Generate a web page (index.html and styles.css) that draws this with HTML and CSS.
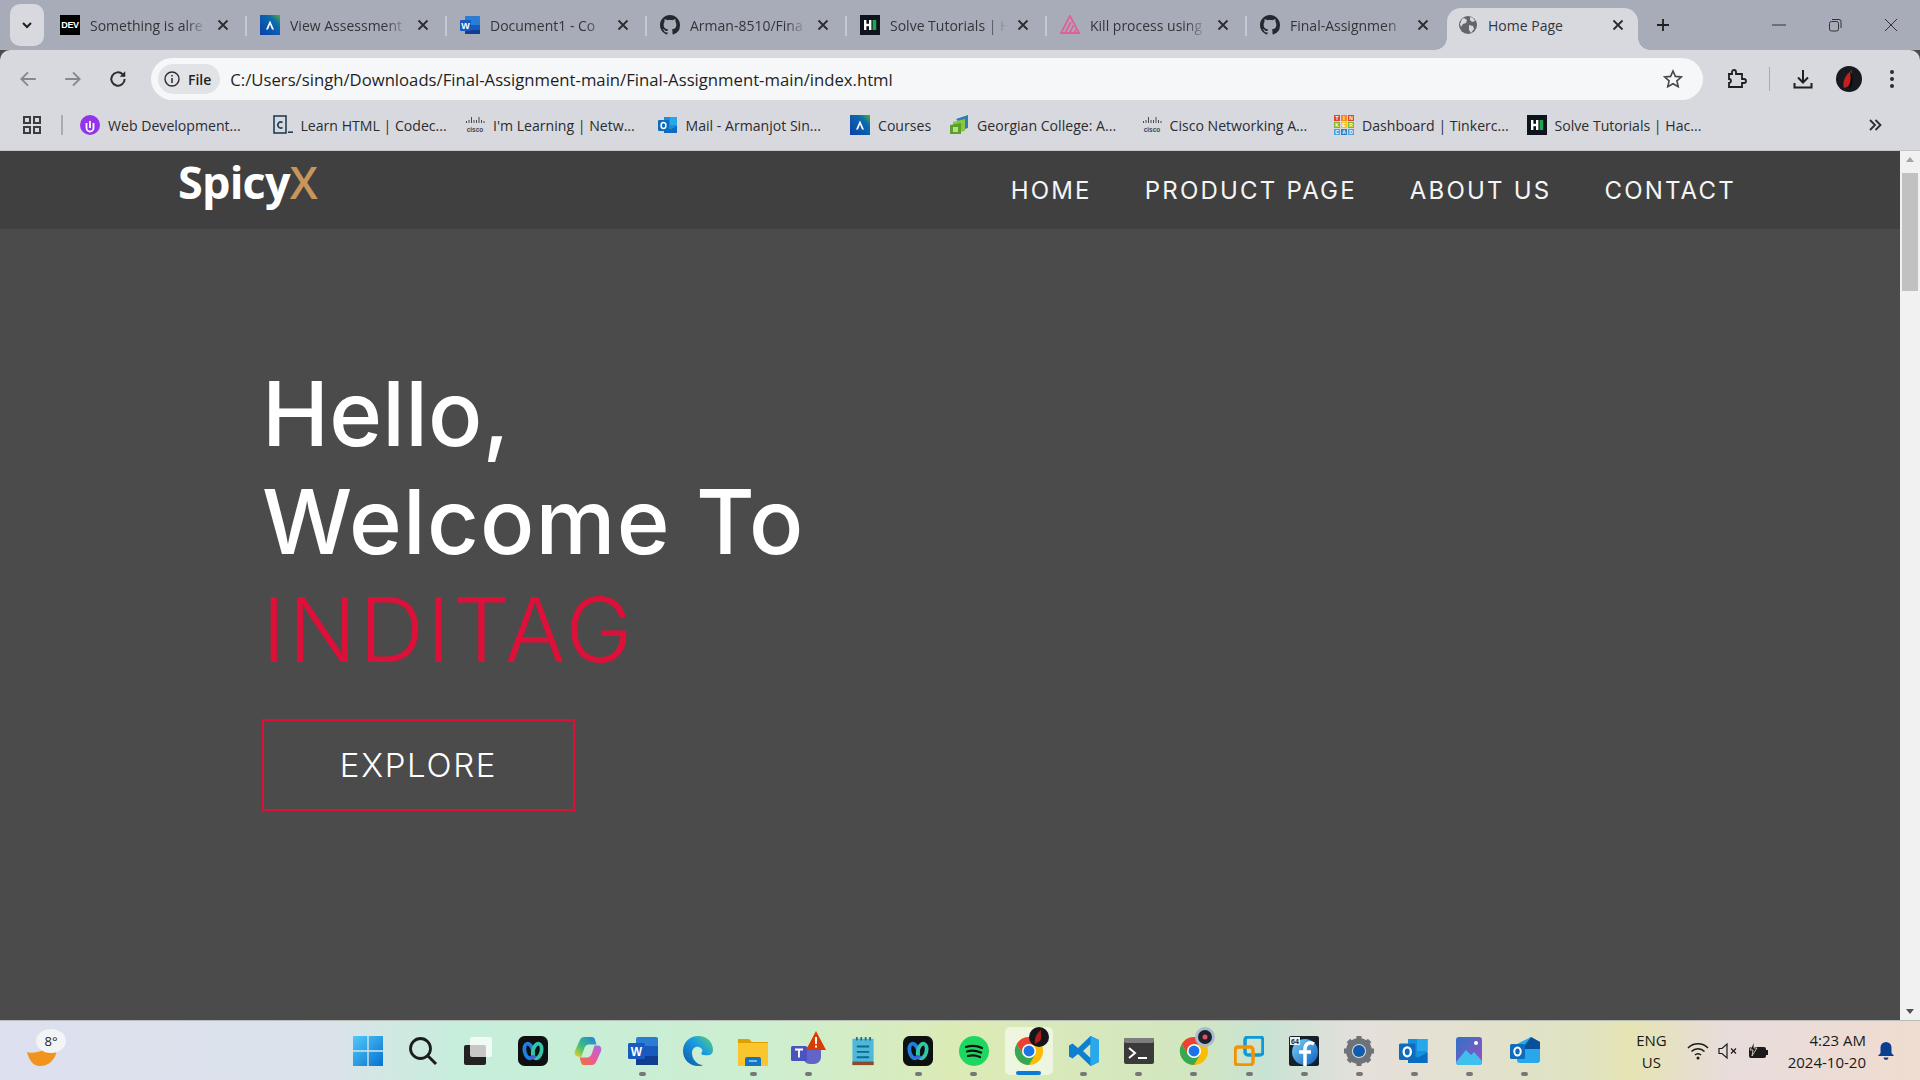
FILE: index.html
```html
<!DOCTYPE html>
<html>
<head>
<meta charset="utf-8">
<title>Home Page</title>
<link rel="stylesheet" href="styles.css">
</head>
<body>

<!-- shared icons -->
<svg class="defs" width="0" height="0">
  <symbol id="i-close" viewBox="0 0 12 12"><path d="M1.500 1.500l9 9M10.500 1.500l-9 9" fill="none" stroke="#2b2c30" stroke-width="1.800"/></symbol>
  <symbol id="i-github" viewBox="0 0 16 16"><path fill="#24292f" d="M8 0C3.58 0 0 3.58 0 8c0 3.54 2.29 6.53 5.47 7.59.4.07.55-.17.55-.38v-1.34c-2.23.48-2.7-1.07-2.7-1.07-.36-.93-.89-1.17-.89-1.17-.73-.5.05-.49.05-.49.8.06 1.23.83 1.23.83.71 1.22 1.87.87 2.33.66.07-.52.28-.87.5-1.07-1.78-.2-3.64-.89-3.64-3.95 0-.87.31-1.59.82-2.15-.08-.2-.36-1.02.08-2.12 0 0 .67-.21 2.2.82A7.7 7.7 0 0 1 8 3.9c.68 0 1.36.09 2 .27 1.53-1.04 2.2-.82 2.2-.82.44 1.1.16 1.92.08 2.12.51.56.82 1.27.82 2.15 0 3.07-1.87 3.75-3.65 3.95.29.25.54.73.54 1.48v2.19c0 .21.15.46.55.38A8 8 0 0 0 16 8c0-4.42-3.58-8-8-8z"/></symbol>
  <symbol id="i-hr" viewBox="0 0 20 20"><rect width="20" height="20" fill="#0e141e"/><rect x="4" y="5" width="2.400" height="10" fill="#fff"/><rect x="9" y="5" width="2.400" height="10" fill="#fff"/><rect x="6" y="8.800" width="3.200" height="2.400" fill="#fff"/><rect x="12.600" y="5" width="3.600" height="10" fill="#1ba94c"/></symbol>
  <symbol id="i-alg" viewBox="0 0 20 20"><defs><linearGradient id="g-alg" x1="0" y1="1" x2="1" y2="0"><stop offset="0" stop-color="#0b3fa8"/><stop offset=".7" stop-color="#0a6bb0"/><stop offset="1" stop-color="#4fb030"/></linearGradient></defs><rect width="20" height="20" fill="url(#g-alg)"/><path d="M10 5.500L14 14.500H12L10 9.600 8 14.500H6z" fill="#fff"/></symbol>
  <symbol id="i-outlook" viewBox="0 0 20 20"><rect x="6" y="2" width="13" height="16" fill="#1490df"/><rect x="12" y="2" width="7" height="8" fill="#28a8ea"/><path d="M6 11l6.500 3.500L19 11v7H6z" fill="#0a6cc0"/><rect x="0" y="5" width="11" height="11" rx="1" fill="#0f6cbd"/><ellipse cx="5.500" cy="10.500" rx="2.400" ry="3" fill="none" stroke="#fff" stroke-width="1.500"/></symbol>
  <symbol id="i-chrome" viewBox="0 0 32 32"><circle cx="16" cy="16" r="15" fill="#fbbc04"/><path d="M16 1A15 15 0 0 0 3 8.500L9.500 19.700 16 9h13A15 15 0 0 0 16 1z" fill="#ea4335"/><path d="M3 8.500A15 15 0 0 0 16 31l6.500-11.300H9.500z" fill="#34a853"/><circle cx="16" cy="16" r="7.500" fill="#fff"/><circle cx="16" cy="16" r="5.800" fill="#1a73e8"/></symbol>
  <symbol id="i-webex" viewBox="0 0 32 32"><rect width="32" height="32" rx="7" fill="#0d0f10"/><ellipse cx="11.500" cy="16" rx="4.500" ry="8" transform="rotate(-14 11.500 16)" fill="none" stroke="#1f7fe0" stroke-width="4"/><ellipse cx="20.500" cy="16" rx="4.500" ry="8" transform="rotate(14 20.500 16)" fill="none" stroke="#2fc7a8" stroke-width="4"/><path d="M14 21c.8 1.800 3.200 1.800 4 0" fill="none" stroke="#4a55d8" stroke-width="4"/></symbol>
</svg>

<div class="tabstrip">
  <button class="tab-search">
    <svg width="14" height="14" viewBox="0 0 14 14"><path d="M3 5l4 4 4-4" fill="none" stroke="#1f1f1f" stroke-width="2"/></svg>
  </button>
  <div class="tabs">
    <div class="tab">
      <span class="favicon dev">DEV</span>
      <span class="tab-title">Something is alre</span>
      <svg class="tab-close"><use href="#i-close"/></svg>
    </div>
    <div class="tab">
      <svg class="favicon"><use href="#i-alg"/></svg>
      <span class="tab-title">View Assessment</span>
      <svg class="tab-close"><use href="#i-close"/></svg>
    </div>
    <div class="tab">
      <svg class="favicon" viewBox="0 0 20 20"><rect x="5" y="1" width="15" height="18" rx="1" fill="#2b7cd3"/><rect x="5" y="10" width="15" height="5" fill="#185abd"/><rect x="5" y="15" width="15" height="4" fill="#103f91"/><rect x="0" y="5" width="11" height="11" rx="1" fill="#185abd"/><text x="5.500" y="13.500" class="word-w">W</text></svg>
      <span class="tab-title">Document1 - Co</span>
      <svg class="tab-close"><use href="#i-close"/></svg>
    </div>
    <div class="tab">
      <svg class="favicon"><use href="#i-github"/></svg>
      <span class="tab-title">Arman-8510/Fina</span>
      <svg class="tab-close"><use href="#i-close"/></svg>
    </div>
    <div class="tab">
      <svg class="favicon"><use href="#i-hr"/></svg>
      <span class="tab-title">Solve Tutorials | H</span>
      <svg class="tab-close"><use href="#i-close"/></svg>
    </div>
    <div class="tab">
      <svg class="favicon" viewBox="0 0 20 20"><g fill="none" stroke="#e0609c" stroke-width="1.800"><path d="M10 1L1 18h18z"/><path d="M5 18l6-11M9.500 18l4-7.500M14 18l2-3.500"/></g></svg>
      <span class="tab-title">Kill process using</span>
      <svg class="tab-close"><use href="#i-close"/></svg>
    </div>
    <div class="tab">
      <svg class="favicon"><use href="#i-github"/></svg>
      <span class="tab-title">Final-Assignmen</span>
      <svg class="tab-close"><use href="#i-close"/></svg>
    </div>
    <div class="tab tab-active">
      <svg class="favicon" viewBox="0 0 20 20"><circle cx="10" cy="10" r="9" fill="#62656c"/><path d="M6 3l3 2-1 3-3 1-2 3-1-3 2-5zM11 10l4 1 1 3-3 4-2-3zM12 2l3 1 2 3-3 1-2-2z" fill="#d8d9de"/></svg>
      <span class="tab-title plain">Home Page</span>
      <svg class="tab-close"><use href="#i-close"/></svg>
    </div>
  </div>
  <span class="new-tab">
    <svg width="14" height="14" viewBox="0 0 14 14"><path d="M7 1v12M1 7h12" stroke="#1f1f1f" stroke-width="1.800"/></svg>
  </span>
  <div class="win-controls">
    <svg width="14" height="14" viewBox="0 0 14 14"><path d="M0 7h14" stroke="#333" stroke-width="1"/></svg>
    <svg width="14" height="14" viewBox="0 0 14 14"><rect x="1.500" y="3.500" width="9" height="9.500" rx="2" fill="none" stroke="#333"/><path d="M4 1.500h7a2 2 0 0 1 2 2V10" fill="none" stroke="#333"/></svg>
    <svg width="14" height="14" viewBox="0 0 14 14"><path d="M1 1l12 12M13 1L1 13" stroke="#333" stroke-width="1"/></svg>
  </div>
</div>

<div class="toolbar">
  <svg class="nav-icon" viewBox="0 0 18 18"><path d="M16 9H3M9 3L3 9l6 6" fill="none" stroke="#85888f" stroke-width="1.700"/></svg>
  <svg class="nav-icon" viewBox="0 0 18 18"><path d="M2 9h13M9 3l6 6-6 6" fill="none" stroke="#85888f" stroke-width="1.700"/></svg>
  <svg class="nav-icon" viewBox="0 0 18 18"><path d="M15 9a6 6 0 1 1-1.800-4.300L15 6.500" fill="none" stroke="#2b2c30" stroke-width="1.800"/><path d="M15.500 2v5h-5z" fill="#2b2c30"/></svg>
  <div class="omnibox">
    <span class="site-chip">
      <svg width="16" height="16" viewBox="0 0 16 16"><circle cx="8" cy="8" r="7" fill="none" stroke="#2b2c30" stroke-width="1.400"/><path d="M8 7v5M8 4v1.600" stroke="#2b2c30" stroke-width="1.500"/></svg>
      File
    </span>
    <span class="url">C:/Users/singh/Downloads/Final-Assignment-main/Final-Assignment-main/index.html</span>
    <svg class="star" viewBox="0 0 20 20"><path d="M10 2l2.400 5.400 5.900.6-4.400 3.900 1.300 5.800L10 14.700l-5.200 3 1.300-5.800L1.700 8l5.900-.6z" fill="none" stroke="#45474c" stroke-width="1.600"/></svg>
  </div>
  <div class="toolbar-right">
    <svg width="22" height="22" viewBox="0 0 22 22"><path d="M3 7h4V5a2 2 0 0 1 4 0v2h6v5h2a2 2 0 0 1 0 4h-2v4H4v-4a2 2 0 0 0 0-4V7z" transform="translate(0 -1)" fill="none" stroke="#1f1f1f" stroke-width="1.800"/></svg>
    <span class="tool-sep"></span>
    <svg width="22" height="22" viewBox="0 0 22 22"><path d="M11 2v12M6 9.500l5 5 5-5M2.500 15v4.500h17V15" fill="none" stroke="#1f1f1f" stroke-width="2"/></svg>
    <svg width="26" height="26" viewBox="0 0 26 26"><circle cx="13" cy="13" r="13" fill="#161a1e"/><path d="M8 22c-2-6 1-13 8-18-1 5 1 7-1 11 0 3-3 6-7 7z" fill="#c3201f"/><path d="M14 5c3 4 4 10 1 17h-3c3-6 3-11 2-17z" fill="#0a0a0a"/></svg>
    <svg class="dots" width="6" height="20" viewBox="0 0 6 20"><circle cx="3" cy="3" r="2" fill="#2b2c30"/><circle cx="3" cy="10" r="2" fill="#2b2c30"/><circle cx="3" cy="17" r="2" fill="#2b2c30"/></svg>
  </div>
</div>

<div class="bookmarks">
  <svg class="apps" width="18" height="18" viewBox="0 0 18 18"><g fill="none" stroke="#3a3c40" stroke-width="2"><rect x="1" y="1" width="6" height="6"/><rect x="11" y="1" width="6" height="6"/><rect x="1" y="11" width="6" height="6"/><rect x="11" y="11" width="6" height="6"/></g></svg>
  <span class="bm-sep"></span>
  <div class="bm">
    <svg viewBox="0 0 20 20"><circle cx="10" cy="10" r="10" fill="#9333ea"/><path d="M6.500 8v5a3.500 3.500 0 0 0 7 0V8" fill="none" stroke="#fff" stroke-width="1.800"/><path d="M10 6v7" stroke="#fff" stroke-width="1.800"/></svg>
    Web Development...
  </div>
  <div class="bm">
    <svg viewBox="0 0 20 20"><rect x="1" y="1" width="12" height="17" fill="none" stroke="#1f3f58" stroke-width="1.600"/><path d="M9.500 7.500a3 3 0 1 0 0 5" fill="none" stroke="#1f3f58" stroke-width="1.600"/><path d="M15 17.200h5" stroke="#1f3f58" stroke-width="1.600"/></svg>
    Learn HTML | Codec...
  </div>
  <div class="bm">
    <svg viewBox="0 0 20 20"><path d="M1.500 6v2M4 5v3M6.500 2v6M9 5v3M11.500 5v3M14 2v6M16.500 5v3M19 6v2" fill="none" stroke="#45484e" stroke-width="1"/><text x="10" y="16.500" class="cisco-txt">cisco</text></svg>
    I'm Learning | Netw...
  </div>
  <div class="bm">
    <svg><use href="#i-outlook"/></svg>
    Mail - Armanjot Sin...
  </div>
  <div class="bm bm-short">
    <svg><use href="#i-alg"/></svg>
    Courses
  </div>
  <div class="bm">
    <svg viewBox="0 0 20 20"><path d="M7 4l12-4v13l-3 1z" fill="#2f7fb5"/><path d="M4 7l12-3v12l-12 2z" fill="#8cc63f"/><path d="M1 10l11-2v11H1z" fill="#5aa02c"/><path d="M4 12h5v5H4z" fill="#b7e07a"/></svg>
    Georgian College: A...
  </div>
  <div class="bm">
    <svg viewBox="0 0 20 20"><path d="M1.500 6v2M4 5v3M6.500 2v6M9 5v3M11.500 5v3M14 2v6M16.500 5v3M19 6v2" fill="none" stroke="#45484e" stroke-width="1"/><text x="10" y="16.500" class="cisco-txt">cisco</text></svg>
    Cisco Networking A...
  </div>
  <div class="bm">
    <svg viewBox="0 0 20 20"><rect width="6" height="6" fill="#e2452f"/><rect x="7" width="6" height="6" fill="#f58b1f"/><rect x="14" width="6" height="6" fill="#e2452f"/><rect y="7" width="6" height="6" fill="#7bb928"/><rect x="7" y="7" width="6" height="6" fill="#f5c21f"/><rect x="14" y="7" width="6" height="6" fill="#7bb928"/><rect y="14" width="6" height="6" fill="#45a5e0"/><rect x="7" y="14" width="6" height="6" fill="#2f7fc5"/><rect x="14" y="14" width="6" height="6" fill="#45a5e0"/><g class="tink-txt"><text x="3" y="5">T</text><text x="10" y="5">I</text><text x="17" y="5">N</text><text x="3" y="12">K</text><text x="10" y="12">E</text><text x="17" y="12">R</text><text x="3" y="19">C</text><text x="10" y="19">A</text><text x="17" y="19">D</text></g></svg>
    Dashboard | Tinkerc...
  </div>
  <div class="bm">
    <svg><use href="#i-hr"/></svg>
    Solve Tutorials | Hac...
  </div>
  <svg class="bm-more" width="14" height="14" viewBox="0 0 14 14"><path d="M2 2l5 5-5 5M7.500 2l5 5-5 5" fill="none" stroke="#2b2c30" stroke-width="1.800"/></svg>
</div>

<div class="viewport">
  <div class="page">
    <header class="site-header">
      <a class="logo">Spicy<span class="logo-x">X</span></a>
      <nav class="site-nav">
        <a>HOME</a>
        <a>PRODUCT PAGE</a>
        <a>ABOUT US</a>
        <a>CONTACT</a>
      </nav>
    </header>
    <section class="hero">
      <h1><span class="hello">Hello,</span><br>Welcome To<br><span class="brand">INDITAG</span></h1>
      <a class="explore">EXPLORE</a>
    </section>
  </div>
  <div class="scrollbar">
    <svg width="20" height="18" viewBox="0 0 20 18"><path d="M10 6l4 5H6z" fill="#a3a3a3"/></svg>
    <div class="scroll-track"><div class="scroll-thumb"></div></div>
    <svg width="20" height="18" viewBox="0 0 20 18"><path d="M10 12l4-5H6z" fill="#505050"/></svg>
  </div>
</div>

<footer class="taskbar">
  <div class="weather">
    <svg width="30" height="28" viewBox="0 0 30 28"><path d="M0 12c6 2 20 0 26-12l3 4c3 12-5 22-16 22C6 26 2 20 0 12z" fill="#f0941e"/></svg>
    <span class="temp">8°</span>
  </div>
  <div class="task-icons">
    <div class="task-icon">
      <svg viewBox="0 0 30 30"><defs><linearGradient id="g-win" x1="0" y1="0" x2="1" y2="1"><stop offset="0" stop-color="#52c8fa"/><stop offset="1" stop-color="#0572cf"/></linearGradient></defs><path d="M0 0h14.300v14.300H0zM15.700 0H30v14.300H15.700zM0 15.700h14.300V30H0zM15.700 15.700H30V30H15.700z" fill="url(#g-win)"/></svg>
    </div>
    <div class="task-icon">
      <svg viewBox="0 0 30 30"><circle cx="12.500" cy="12.500" r="10" fill="none" stroke="#1d1d1d" stroke-width="2.800"/><path d="M20 20l8 8" stroke="#1d1d1d" stroke-width="3"/></svg>
    </div>
    <div class="task-icon">
      <svg viewBox="0 0 30 30"><rect x="1" y="9" width="22" height="20" rx="2" fill="#222"/><rect x="7" y="1" width="22" height="20" rx="2" fill="#fff" opacity=".75"/></svg>
    </div>
    <div class="task-icon">
      <svg><use href="#i-webex"/></svg>
    </div>
    <div class="task-icon">
      <svg viewBox="0 0 30 32"><defs><linearGradient id="g-cop1" x1="0" y1="1" x2="1" y2="0"><stop offset="0" stop-color="#f5d018"/><stop offset=".4" stop-color="#3fc07a"/><stop offset="1" stop-color="#1f7fe8"/></linearGradient><linearGradient id="g-cop2" x1="0" y1="1" x2="1" y2="0"><stop offset="0" stop-color="#f0732f"/><stop offset=".5" stop-color="#e85a9c"/><stop offset="1" stop-color="#a66be8"/></linearGradient></defs><path d="M11 1h8c2 0 3 1 3.500 3L24 9h-8c-3 0-4 2-5 4l-3 9H5c-3 0-5-2-4-6L6 5c1-3 3-4 5-4z" fill="url(#g-cop1)"/><path d="M19 31h-8c-2 0-3-1-3.500-3L6 23h8c3 0 4-2 5-4l3-9h3c3 0 5 2 4 6l-5 11c-1 3-3 4-5 4z" fill="url(#g-cop2)"/></svg>
    </div>
    <div class="task-icon has-dot">
      <svg viewBox="0 0 30 30"><rect x="8" y="1" width="22" height="28" rx="2" fill="#2b7cd3"/><rect x="8" y="10" width="22" height="10" fill="#185abd"/><rect x="8" y="20" width="22" height="9" fill="#103f91"/><rect x="0" y="7" width="17" height="16" rx="1.500" fill="#185abd"/><text x="8.500" y="19.500" class="word-w big">W</text></svg>
    </div>
    <div class="task-icon">
      <svg viewBox="0 0 30 30"><defs><linearGradient id="g-edge" x1="0" y1="1" x2="1" y2="0"><stop offset="0" stop-color="#0b56a8"/><stop offset=".6" stop-color="#1b9de2"/><stop offset="1" stop-color="#5fd56a"/></linearGradient></defs><path d="M15 0c9 0 15 6 15 14 0 5-5 6-9 5-3 0-3-2-2-3 1-2 0-4-3-5-4-1-7 2-7 6 0 6 5 12 11 12-1 1-3 1-5 1C6 30 0 23 0 15S6 0 15 0z" fill="url(#g-edge)"/></svg>
    </div>
    <div class="task-icon has-dot">
      <svg viewBox="0 0 30 30"><path d="M0 3h11l3 3h16v4H0z" fill="#e0a000"/><path d="M0 7h30v23H0z" fill="#fbc52e"/><path d="M7 23a2 2 0 0 1 2-2h12a2 2 0 0 1 2 2v7H7z" fill="#1474c4"/><path d="M11 25h8" stroke="#9fd0f0" stroke-width="1.500"/></svg>
    </div>
    <div class="task-icon has-dot">
      <svg class="teams" viewBox="0 0 36 36"><circle cx="25" cy="15" r="4" fill="#7b83eb"/><path d="M13 16h18v10a7 7 0 0 1-7 7h-4a7 7 0 0 1-7-7z" fill="#6264c8"/><rect x="1" y="15" width="16" height="15" rx="1.500" fill="#4b53bc"/><path d="M5 18.500h8M9 18.500v8" stroke="#fff" stroke-width="1.800"/><path d="M26 0l10 19H16z" fill="#da3b01"/><path d="M26 6v7M26 14.500v2" stroke="#fff" stroke-width="2"/></svg>
    </div>
    <div class="task-icon">
      <svg viewBox="0 0 30 34"><rect x="3" y="3" width="24" height="30" rx="1" fill="#4fb8d8"/><rect x="3" y="29" width="24" height="4" fill="#8a4b2f"/><path d="M8 1v4M13 1v4M18 1v4M23 1v4" stroke="#1a6f95" stroke-width="2"/><path d="M8 12h14M8 18h14M8 24h14" stroke="#0d6a90" stroke-width="2.200"/></svg>
    </div>
    <div class="task-icon has-dot">
      <svg><use href="#i-webex"/></svg>
    </div>
    <div class="task-icon has-dot">
      <svg viewBox="0 0 30 30"><circle cx="15" cy="15" r="15" fill="#1ed760"/><path d="M7 11c6-2 11-1.500 16 1M8 15.500c5-1.500 9-1 14 1M9 20c4-1 8-.7 12 1" fill="none" stroke="#111" stroke-width="2.200" stroke-linecap="round"/></svg>
    </div>
    <div class="task-icon task-active">
      <svg><use href="#i-chrome"/></svg>
      <svg class="badge-avatar" viewBox="0 0 20 20"><circle cx="10" cy="10" r="10" fill="#15161a"/><path d="M6 17c-1-5 1-10 6-14 0 5 1 8-1 11z" fill="#b01c1c"/></svg>
    </div>
    <div class="task-icon has-dot">
      <svg viewBox="0 0 30 30"><path d="M21.500 0L30 4v22l-8.500 4L9 18l-5.500 4.500L0 20.500v-11L3.500 7.500 9 12zM21.500 8L14 15l7.500 7z" fill="#0d7fd0"/><path d="M21.500 0L30 4v22l-8.500 4z" fill="#29a9ec"/></svg>
    </div>
    <div class="task-icon has-dot">
      <svg viewBox="0 0 30 26"><rect width="30" height="26" rx="2" fill="#3a3a3a"/><rect width="30" height="5" rx="2" fill="#7d7d7d"/><path d="M5 10l6 5-6 5" fill="none" stroke="#fff" stroke-width="2"/><path d="M14 20h9" stroke="#fff" stroke-width="2"/></svg>
    </div>
    <div class="task-icon has-dot">
      <svg><use href="#i-chrome"/></svg>
      <svg class="badge-avatar" viewBox="0 0 20 20"><circle cx="10" cy="10" r="10" fill="#a9bdd0"/><circle cx="10" cy="10" r="7" fill="#20202a"/><circle cx="10" cy="10" r="2.500" fill="#e0506a"/></svg>
    </div>
    <div class="task-icon has-dot">
      <svg viewBox="0 0 30 30"><rect x="11" y="1" width="18" height="18" rx="3" fill="none" stroke="#0e9ad6" stroke-width="3.500"/><rect x="1" y="11" width="18" height="18" rx="3" fill="none" stroke="#f49300" stroke-width="3.500"/></svg>
    </div>
    <div class="task-icon has-dot">
      <svg viewBox="0 0 30 30"><defs><linearGradient id="g-fed" x1="0" y1="0" x2="1" y2="1"><stop offset="0" stop-color="#7cd0f5"/><stop offset="1" stop-color="#0a5fc0"/></linearGradient></defs><rect width="30" height="30" rx="2" fill="#16202c"/><circle cx="16" cy="16" r="13" fill="url(#g-fed)"/><path d="M25 8c-5-3-9 0-9 5v17M10 16h12" fill="none" stroke="#fff" stroke-width="3.500"/><rect x="1" y="1" width="10" height="8" fill="#eee"/><text x="6" y="7.500" class="badge-64">64</text></svg>
    </div>
    <div class="task-icon has-dot">
      <svg viewBox="0 0 30 30"><circle cx="15" cy="15" r="10" fill="none" stroke="#6d7378" stroke-width="6"/><g stroke="#6d7378" stroke-width="5"><path d="M15 0v5M15 25v5M0 15h5M25 15h5M4.400 4.400l3.500 3.500M22.100 22.100l3.500 3.500M4.400 25.600l3.500-3.500M22.100 7.900l3.500-3.500"/></g><circle cx="15" cy="15" r="6" fill="#0f5cb0"/></svg>
    </div>
    <div class="task-icon has-dot">
      <svg viewBox="0 0 20 20"><use href="#i-outlook"/></svg>
    </div>
    <div class="task-icon has-dot">
      <svg viewBox="0 0 30 30"><defs><linearGradient id="g-ph" x1="0" y1="0" x2="1" y2="1"><stop offset="0" stop-color="#2d73c8"/><stop offset="1" stop-color="#9a4fc0"/></linearGradient></defs><rect x="2" y="1" width="26" height="28" rx="3" fill="url(#g-ph)"/><path d="M2 26l10-12 5 5 3-3 8 9v1a3 3 0 0 1-3 3H5a3 3 0 0 1-3-3z" fill="#3fc0ec"/><circle cx="22" cy="7" r="2" fill="#fff"/></svg>
    </div>
    <div class="task-icon has-dot">
      <svg viewBox="0 0 30 30"><path d="M7 8l14-7 9 5v18a3 3 0 0 1-3 3H10a3 3 0 0 1-3-3z" fill="#28a8ea"/><path d="M21 1l9 5v7H12z" fill="#0a4f9c"/><rect x="0" y="8" width="15" height="15" rx="1.500" fill="#0f6cbd"/><ellipse cx="7.500" cy="15.500" rx="3.200" ry="4" fill="none" stroke="#fff" stroke-width="2"/></svg>
    </div>
  </div>
  <div class="tray">
    <div class="lang">ENG<br>US</div>
    <svg width="22" height="18" viewBox="0 0 22 18"><path d="M1 6a14 14 0 0 1 20 0M4.500 9.500a9 9 0 0 1 13 0M8 13a4 4 0 0 1 6 0" fill="none" stroke="#1a1a1a" stroke-width="1.500"/><circle cx="11" cy="16" r="1.500" fill="#1a1a1a"/></svg>
    <svg width="20" height="18" viewBox="0 0 20 18"><path d="M1 6.500h3L9 2v14l-5-4.500H1z" fill="none" stroke="#1a1a1a" stroke-width="1.200"/><path d="M13 6.500l5 5M18 6.500l-5 5" stroke="#1a1a1a" stroke-width="1.200"/></svg>
    <svg width="22" height="18" viewBox="0 0 22 18"><rect x="2" y="5" width="17" height="11" rx="2" fill="#1a1a1a"/><rect x="19" y="8" width="2" height="5" fill="#1a1a1a"/><path d="M7 0L3 8h3l-1 6 5-8H7z" fill="#1a1a1a" stroke="#e8e4d0" stroke-width=".8"/></svg>
    <div class="clock">4:23 AM<br>2024-10-20</div>
    <svg class="bell" width="18" height="20" viewBox="0 0 18 20"><path d="M9 1a5.500 5.500 0 0 1 5.500 5.500V12l2.500 3H1l2.500-3V6.500A5.500 5.500 0 0 1 9 1z" fill="#0a3f8f"/><path d="M6.500 16.500h5a2.500 2.500 0 0 1-5 0z" fill="#0a3f8f"/></svg>
  </div>
</footer>

</body>
</html>
```

FILE: styles.css
```css
* {box-sizing: border-box;}

html, body {
  margin: 0;
  height: 100%;
  overflow: hidden;
}

body {
  display: flex;
  flex-direction: column;
  width: 1920px;
  height: 1080px;
  font-family: "Open Sans", sans-serif;
  background: #4b4b4b;
  color: #1f1f1f;
}

.defs {
  position: absolute;
}

/* browser tabs */
.tabstrip {
  display: flex;
  align-items: center;
  height: 50px;
  background: #a8acb8;
}

.tab-search {
  display: flex;
  align-items: center;
  justify-content: center;
  width: 34px;
  height: 42px;
  margin: 0 3px 0 10px;
  padding: 0;
  border: 0;
  border-radius: 10px;
  background: #d8d9de;
}

.tabs {
  display: flex;
  align-self: stretch;
}

.tab {
  position: relative;
  display: flex;
  align-items: center;
  width: 200px;
  padding: 0 18px 0 13px;
  font-size: 14px;
  color: #33353a;
}

.tab::after {
  content: "";
  position: absolute;
  right: 0;
  top: 16px;
  height: 20px;
  width: 2px;
  background: #c6c8d0;
}

.tab:nth-child(7)::after {
  display: none;
}

.tab-active {
  width: 191px;
  margin-top: 8px;
  padding: 0 14px 8px 11px;
  border-radius: 14px 14px 0 0;
  background: #d8d9de;
}

.tab-active::before,
.tab-active::after {
  content: "";
  position: absolute;
  top: auto;
  bottom: 0;
  width: 12px;
  height: 12px;
}

.tab-active::before {
  left: -12px;
  background: radial-gradient(circle at 0 0, transparent 11.5px, #d8d9de 12px);
}

.tab-active::after {
  right: -12px;
  background: radial-gradient(circle at 100% 0, transparent 11.5px, #d8d9de 12px);
}

.favicon {
  flex: none;
  width: 20px;
  height: 20px;
  margin-right: 10px;
}

.dev {
  background: #000;
  color: #fff;
  font: bold 9px/20px "Liberation Sans Narrow", "Liberation Sans", sans-serif;
  text-align: center;
  letter-spacing: -0.3px;
}

.word-w {
  font: bold 9px "Liberation Sans", sans-serif;
  fill: #fff;
  text-anchor: middle;
}

.word-w.big {
  font-size: 12px;
}

.badge-64 {
  font: bold 7px "Liberation Sans", sans-serif;
  fill: #222;
  text-anchor: middle;
}

.cisco-txt {
  font: bold 6.500px "Liberation Sans", sans-serif;
  fill: #45484e;
  text-anchor: middle;
}

.tink-txt {
  font: bold 5px "Liberation Sans", sans-serif;
  fill: #fff;
  text-anchor: middle;
}

.tab-title {
  flex: 1;
  overflow: hidden;
  white-space: nowrap;
  -webkit-mask-image: linear-gradient(to right, #000 82%, transparent 100%);
  mask-image: linear-gradient(to right, #000 82%, transparent 100%);
}

.tab-title.plain {
  -webkit-mask-image: none;
  mask-image: none;
}

.tab-close {
  flex: none;
  width: 12px;
  height: 12px;
  margin-left: 10px;
}

.new-tab {
  display: flex;
  margin-left: 18px;
}

.win-controls {
  display: flex;
  gap: 42px;
  margin-left: auto;
  margin-right: 22px;
}

/* address bar row */
.toolbar {
  display: flex;
  align-items: center;
  height: 58px;
  padding: 0 0 0 18px;
  border-radius: 10px 10px 0 0;
  background: #d8d9de;
}

.nav-icon {
  width: 20px;
  height: 20px;
  margin-right: 25px;
}

.nav-icon:nth-child(3) {
  margin-right: 23px;
}

.omnibox {
  display: flex;
  align-items: center;
  width: 1552px;
  height: 42px;
  padding: 0 20px 0 7px;
  border-radius: 21px;
  background: #f6f7f9;
}

.site-chip {
  display: flex;
  align-items: center;
  gap: 8px;
  height: 30px;
  padding: 0 9px 0 6px;
  border-radius: 15px;
  background: #e2e3e7;
  font-size: 14px;
  font-weight: 600;
}

.url {
  flex: 1;
  margin-left: 10px;
  font-size: 16.700px;
}

.star {
  width: 20px;
  height: 20px;
}

.toolbar-right {
  display: flex;
  align-items: center;
  margin-left: 22px;
  gap: 22px;
}

.tool-sep {
  width: 1px;
  height: 24px;
  background: #a8acb8;
}

.dots {
  margin-left: 5px;
}

/* bookmarks row */
.bookmarks {
  display: flex;
  align-items: center;
  height: 43px;
  padding: 0 0 8px 23px;
  background: #d8d9de;
  font-size: 14.100px;
  border-bottom: 1px solid #c4c5cb;
}

.apps {
  margin-right: 20px;
}

.bm-sep {
  width: 2px;
  height: 20px;
  margin-right: 17px;
  background: #a8abb2;
}

.bm {
  display: flex;
  align-items: center;
  flex: none;
  gap: 8px;
  width: 192.500px;
  white-space: nowrap;
  color: #2b2c30;
}

.bm-short {
  width: 99px;
}

.bm svg {
  width: 20px;
  height: 20px;
}

.bm-more {
  margin-left: auto;
  margin-right: 38px;
}

/* the page in the window */
.viewport {
  display: flex;
  flex: 1;
  min-height: 0;
}

.page {
  flex: 1;
  display: flex;
  flex-direction: column;
  background: #4b4b4b;
}

.site-header {
  display: flex;
  align-items: center;
  justify-content: space-between;
  height: 78px;
  padding: 0 164px 0 178px;
  background: #404040;
}

.logo {
  margin-top: -18px;
  font-family: "Open Sans", sans-serif;
  font-size: 45px;
  font-weight: 700;
  color: #fff;
  letter-spacing: -0.800px;
}

.logo-x {
  color: #c8965a;
  font-weight: 600;
}

.site-nav {
  display: flex;
  gap: 53px;
}

.site-nav a {
  font-family: Inter, sans-serif;
  font-size: 24px;
  letter-spacing: 2.200px;
  color: #f5f5f5;
}

.hero {
  padding: 131px 0 0 262px;
}

.hero h1 {
  margin: 0;
  font-family: Inter, sans-serif;
  font-size: 90px;
  font-weight: 500;
  line-height: 108px;
  letter-spacing: 1.200px;
  color: #fff;
}

.hello {
  letter-spacing: 0.200px;
}

.brand {
  font-weight: 300;
  letter-spacing: 2.600px;
  color: #dc1039;
}

.explore {
  display: flex;
  align-items: center;
  justify-content: center;
  width: 313px;
  height: 92px;
  margin-top: 35px;
  border: 2px solid #dc1039;
  font-family: Inter, sans-serif;
  font-size: 33px;
  font-weight: 300;
  letter-spacing: 1.700px;
  color: #fff;
}

.scrollbar {
  display: flex;
  flex-direction: column;
  flex: none;
  width: 20px;
  background: #f1f1f1;
}

.scroll-track {
  flex: 1;
}

.scroll-thumb {
  height: 118px;
  margin: 4px 2px 0;
  background: #c1c1c1;
}

/* windows taskbar */
.taskbar {
  display: flex;
  align-items: center;
  flex: none;
  height: 60px;
  border-top: 1px solid #b9bbb8;
  background: linear-gradient(to right, #dde0ef 0%, #dbe2ea 17%, #c6eedb 24%, #cdeed0 40%, #dcebb6 50%, #d2e6c0 62%, #c9e3d3 66%, #e6dfdb 71%, #dfe3c2 82%, #e5e4b4 85%, #e8dcdc 90%, #f0dcd0 100%);
}

.weather {
  position: relative;
  display: flex;
  width: 60px;
  height: 58px;
  margin-left: 27px;
  padding-top: 18px;
}

.temp {
  position: absolute;
  left: 9px;
  top: 7px;
  width: 30px;
  height: 24px;
  border-radius: 50%;
  background: #f3f4f6;
  font-size: 13px;
  line-height: 24px;
  text-align: center;
}

.task-icons {
  display: flex;
  margin-left: 253px;
}

.task-icon {
  position: relative;
  display: flex;
  align-items: center;
  justify-content: center;
  width: 55.100px;
  height: 58px;
}

.task-icon svg {
  width: 30px;
  height: 30px;
}

.task-icon svg.teams {
  width: 36px;
  height: 36px;
  margin-top: -4px;
}

.task-icon svg.badge-avatar {
  position: absolute;
  right: 7px;
  top: 5px;
  width: 20px;
  height: 20px;
}

.has-dot::after {
  content: "";
  position: absolute;
  left: 24px;
  bottom: 4px;
  width: 7px;
  height: 4px;
  border-radius: 2px;
  background: #777;
}

.task-active::before {
  content: "";
  position: absolute;
  left: 4px;
  top: 5px;
  width: 48px;
  height: 48px;
  border-radius: 5px;
  background: rgba(255, 255, 255, 0.55);
}

.task-active svg {
  position: relative;
}

.task-active::after {
  content: "";
  position: absolute;
  left: 15px;
  bottom: 5px;
  width: 25px;
  height: 4px;
  border-radius: 2px;
  background: #0a7cd4;
}

.tray {
  display: flex;
  align-items: center;
  margin-left: auto;
  padding-right: 25px;
  font-size: 15px;
  color: #1a1a1a;
}

.tray svg {
  margin-left: 9px;
}

.tray svg.bell {
  margin-left: 11px;
}

.lang {
  margin-right: 11px;
  line-height: 22px;
  text-align: center;
}

.clock {
  margin: 0 0 0 19px;
  line-height: 22px;
  text-align: right;
}
```
